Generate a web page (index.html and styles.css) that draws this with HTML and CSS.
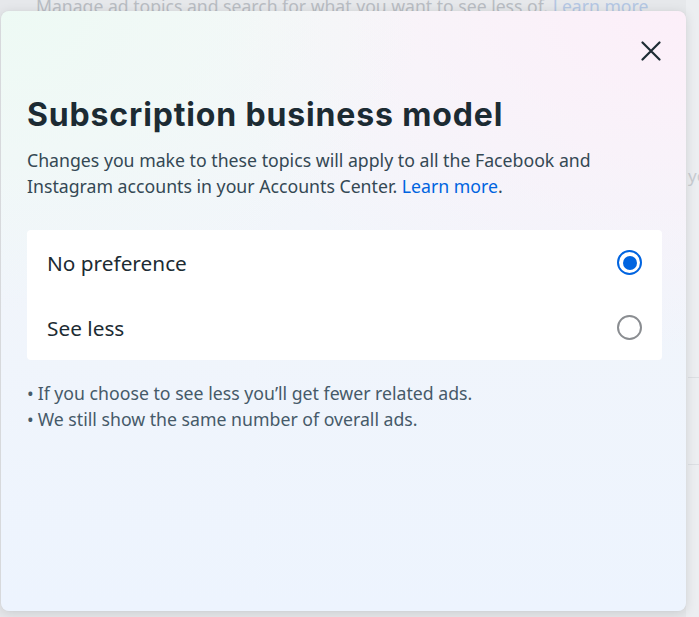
FILE: index.html
```html
<!DOCTYPE html>
<html lang="en">
<head>
<meta charset="utf-8">
<title>Subscription business model</title>
<link rel="stylesheet" href="styles.css">
</head>
<body>
<div class="backdrop">
  <p class="bg-text">Manage ad topics and search for what you want to see less of. <span class="bg-link">Learn more</span></p>
  <div class="bg-side">
    <span class="bg-yo">yo</span>
    <span class="bg-line l1"></span>
    <span class="bg-line l2"></span>
  </div>
  <div class="modal">
    <div class="modal-head">
      <button class="close" aria-label="Close">
        <svg width="20" height="20" viewBox="0 0 20 20"><path d="M1.5 1.5 L18.5 18.5 M18.5 1.5 L1.5 18.5" stroke="#1c2b33" stroke-width="2.2" stroke-linecap="round" fill="none"/></svg>
      </button>
    </div>
    <h1 class="title">Subscription business model</h1>
    <p class="desc">Changes you make to these topics will apply to all the Facebook and Instagram accounts in your Accounts Center. <a class="link" href="#">Learn more</a>.</p>
    <div class="options">
      <label class="option">
        <span class="opt-label">No preference</span>
        <span class="radio checked"><span class="dot"></span></span>
      </label>
      <label class="option">
        <span class="opt-label">See less</span>
        <span class="radio"></span>
      </label>
    </div>
    <ul class="notes">
      <li>If you choose to see less you’ll get fewer related ads.</li>
      <li>We still show the same number of overall ads.</li>
    </ul>
  </div>
</div>
</body>
</html>
```

FILE: styles.css
```css
* { box-sizing: border-box; }
html, body { margin: 0; padding: 0; }
body {
  width: 699px;
  height: 617px;
  overflow: hidden;
  background: #e3e5e8;
  font-family: "Noto Sans", "Open Sans", sans-serif;
}
.backdrop {
  position: relative;
  width: 699px;
  height: 617px;
  overflow: hidden;
  background: #e6e8eb;
}
.bg-text {
  position: absolute;
  left: 36px;
  top: -6px;
  margin: 0;
  font-size: 17.6px;
  color: #b9bdc3;
  white-space: nowrap;
}
.bg-link { color: #b4c7e4; }
.bg-side {
  position: absolute;
  left: 686px;
  top: 0;
  width: 13px;
  height: 617px;
  background: #eceef1;
}
.bg-yo {
  position: absolute;
  left: 2px;
  top: 164px;
  font-size: 17px;
  color: #c8ccd1;
}
.bg-line {
  position: absolute;
  left: 2px;
  width: 11px;
  height: 1px;
  background: #dcdfe3;
}
.l1 { top: 377px; }
.l2 { top: 464px; }

.modal {
  position: absolute;
  left: 1px;
  top: 11px;
  width: 685px;
  height: 600px;
  border-radius: 8px;
  padding: 0 25px 0 26px;
  background:
    radial-gradient(ellipse 420px 300px at 0% 0%, rgba(237, 250, 244, 0.95), rgba(237, 250, 244, 0) 100%),
    radial-gradient(ellipse 480px 340px at 100% 0%, rgba(252, 239, 249, 1), rgba(252, 239, 249, 0) 100%),
    linear-gradient(180deg, #f6f7f9 0%, #f1f5fb 45%, #edf4fe 100%);
  box-shadow: 0 2px 12px rgba(0, 0, 0, 0.12), 0 0 1px rgba(0,0,0,0.1);
}
.modal-head {
  display: flex;
  justify-content: flex-end;
  height: 84px;
  padding-top: 28px;
  margin-right: -2px;
}
.close {
  width: 24px;
  height: 24px;
  padding: 0;
  border: 0;
  background: none;
  display: flex;
  align-items: center;
  justify-content: center;
  cursor: pointer;
}
.close svg { width: 20px; height: 20px; }
.title {
  margin: 0;
  font-family: "Inter", "Open Sans", sans-serif;
  font-weight: 700;
  font-size: 32px;
  line-height: 40px;
  color: #1c2b33;
  letter-spacing: 0.85px;
}
.desc {
  margin: 12px 0 0;
  font-size: 17.7px;
  line-height: 26px;
  color: #344854;
  max-width: 600px;
}
.link { color: #0064e0; text-decoration: none; }
.options {
  margin-top: 31px;
  background: #fff;
  border-radius: 4px;
  width: 635px;
}
.option {
  display: flex;
  align-items: center;
  justify-content: space-between;
  height: 65px;
  padding: 0 20px 0 20px;
  cursor: pointer;
}
.opt-label {
  font-size: 20.8px;
  color: #1c2b33;
}
.radio {
  width: 25px;
  height: 25px;
  border-radius: 50%;
  border: 2px solid #8a8d91;
  display: flex;
  align-items: center;
  justify-content: center;
}
.radio.checked { border: 2.5px solid #0064e0; }
.dot {
  width: 14px;
  height: 14px;
  border-radius: 50%;
  background: #0064e0;
}
.notes {
  list-style: none;
  margin: 20px 0 0;
  padding: 0;
  font-size: 17.7px;
  line-height: 26px;
  color: #465a69;
}
.notes li::before {
  content: "•";
  margin-right: 4px;
}
```
